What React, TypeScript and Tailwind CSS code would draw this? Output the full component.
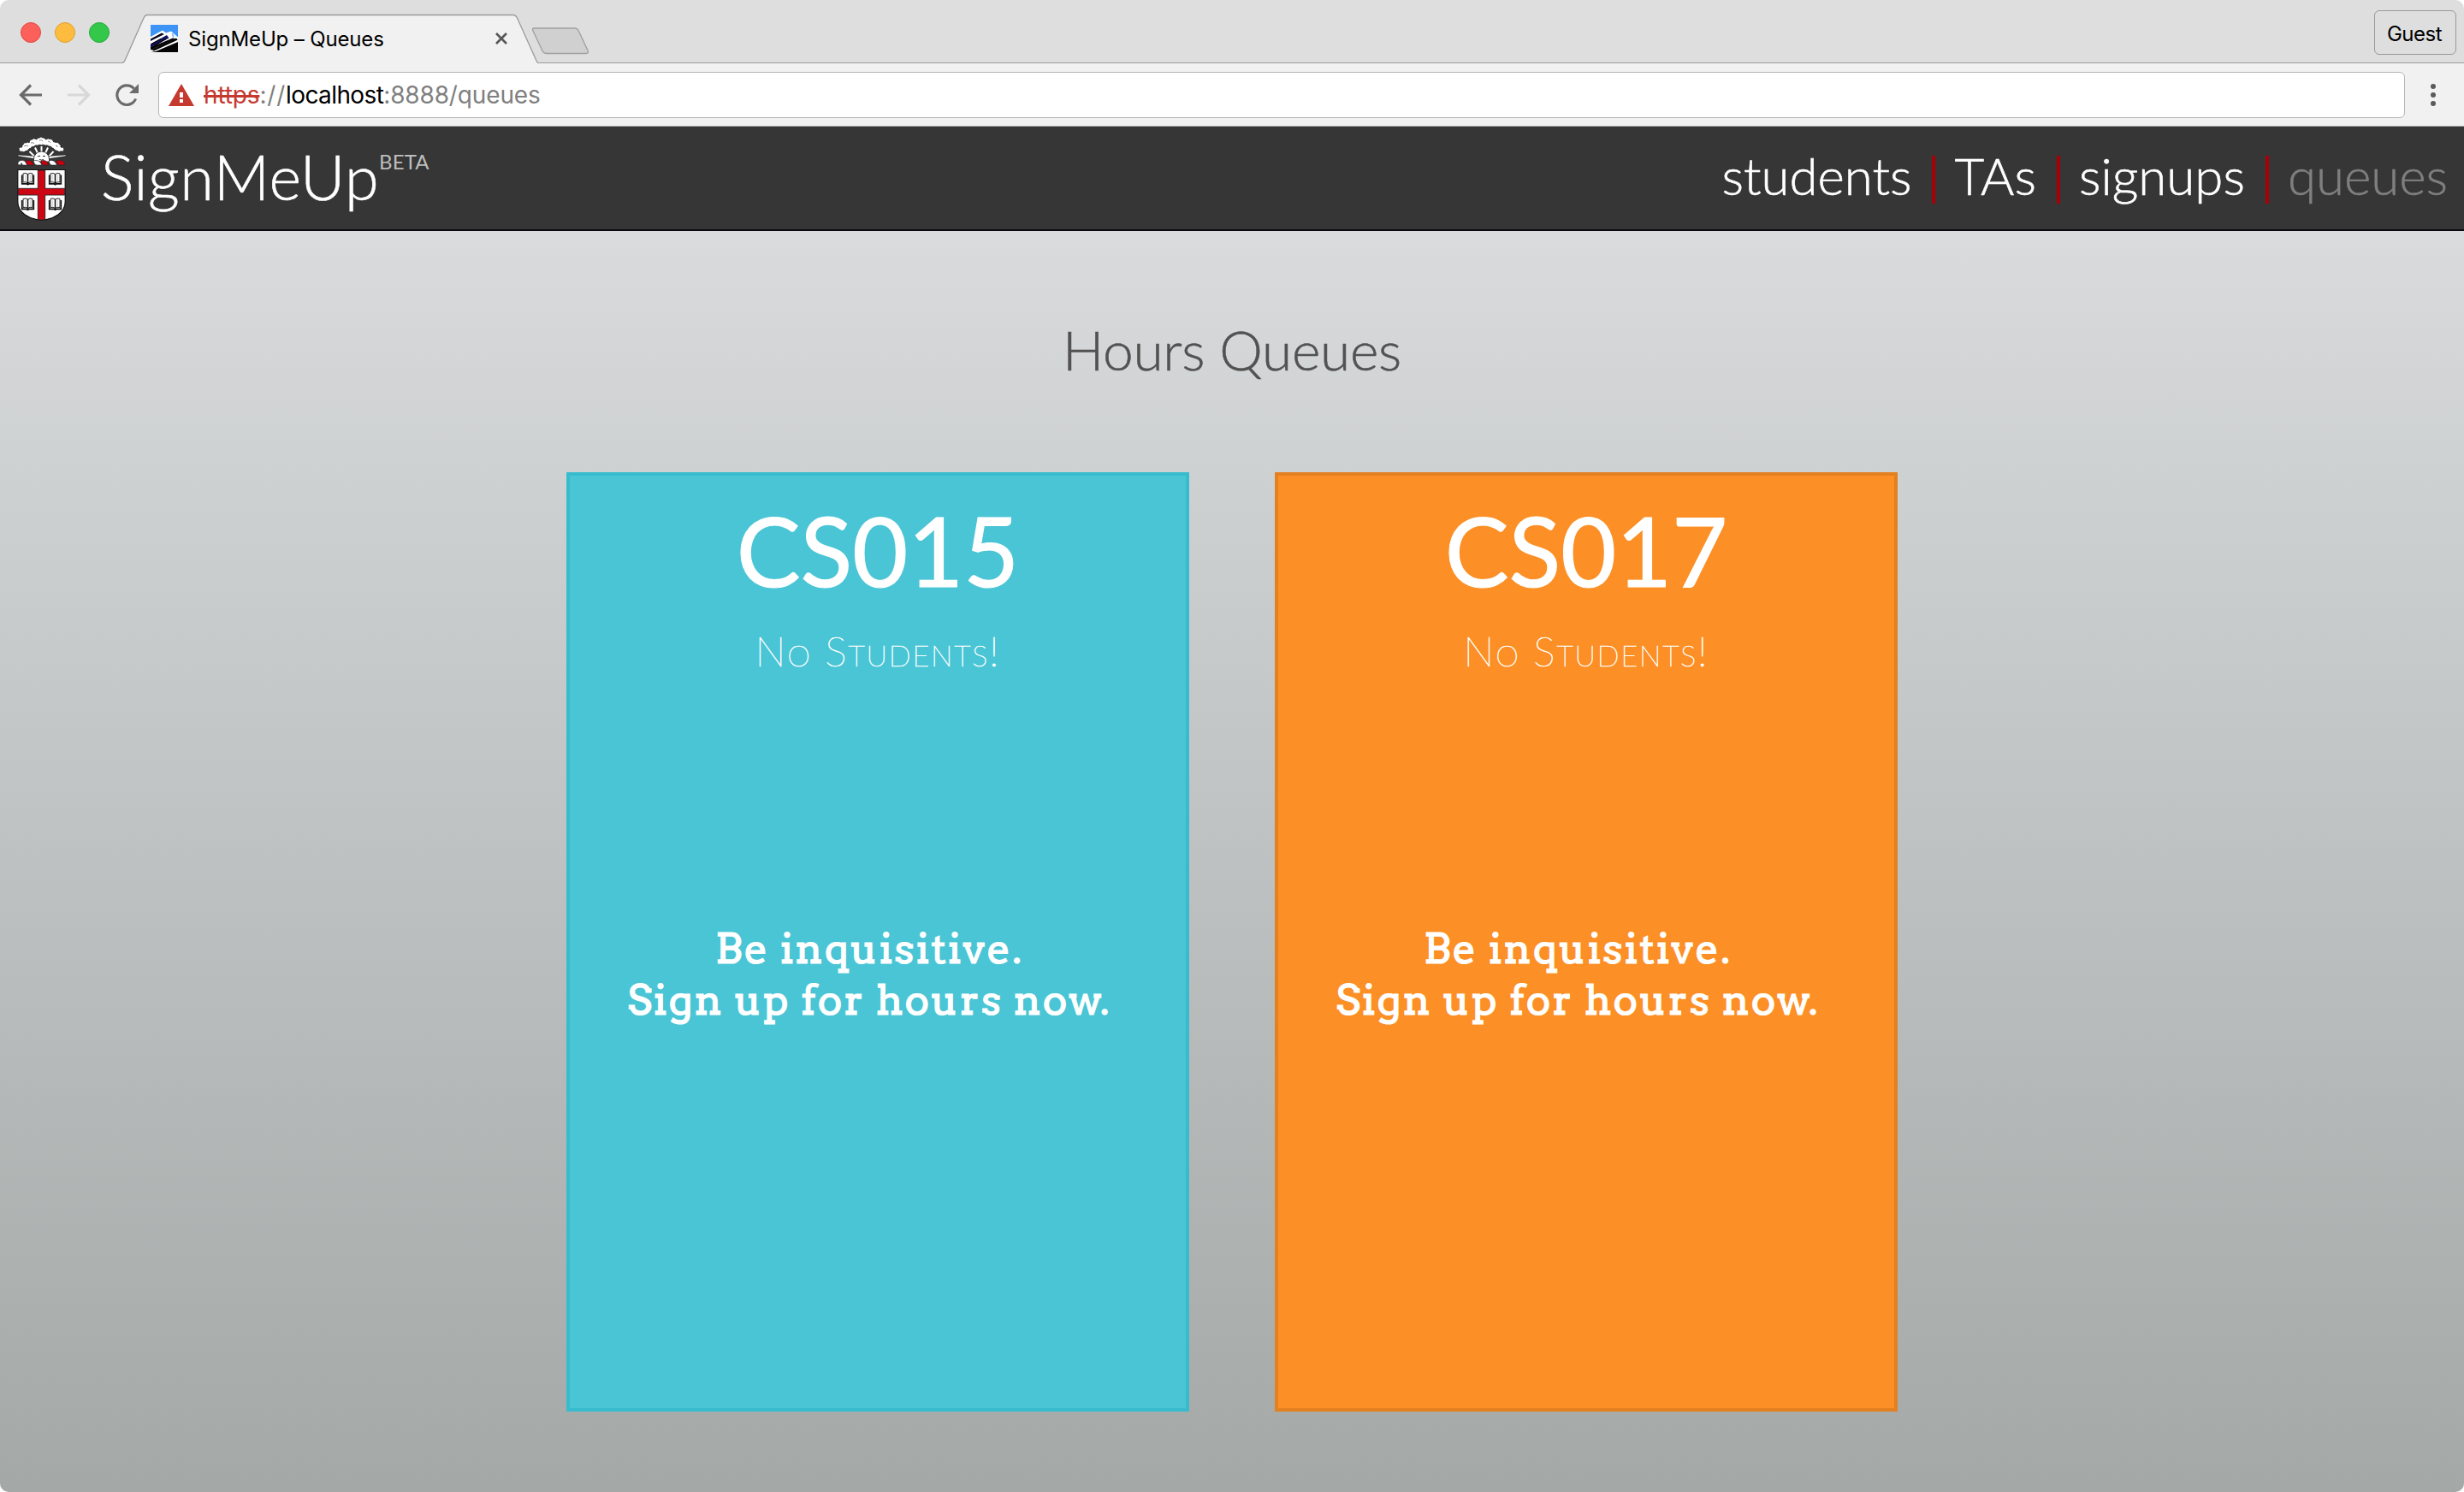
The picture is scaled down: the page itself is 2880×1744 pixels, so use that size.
const navItems = ['students', 'TAs', 'signups', 'queues'];

function Favicon() {
  return (
    <svg className="size-8 shrink-0" viewBox="0 0 32 32">
      <rect width="32" height="32" fill="#3d94f6" />
      <path d="M0 14 14 6.500l4 3 6-2 8 7v8L0 28z" fill="#fff" />
      <path d="M0 16.500 13 9.500l3 1.500L0 19z" fill="#0a0a22" />
      <path d="M0 22.500 19 12l2.500 3.500L0 26.500z" fill="#10105e" />
      <path d="M1 22.500 12 16.500M4 24.500 18 16.500" stroke="#05050d" strokeWidth="1.400" />
      <path d="M24.500 10.500l1.500-1 2 4-2 1.500z" fill="#8fbdf2" />
      <path d="M0 29.500 30 15.500 32 18v5L12 32H0z" fill="#050505" />
      <path d="M0 28.500V32l6-1L32 20v-2.500L4 30.500z" fill="#fff" />
      <path d="M8 32 32 21v11z" fill="#050505" />
      <path d="M0 26 14 20.500 26 15.500 29 16.500 0 29.500z" fill="#050505" />
    </svg>
  );
}

function Tab() {
  return (
    <div className="relative ml-[15px] flex h-[58px] w-[486px] items-center pl-[33px]">
      <svg className="absolute inset-0 h-[58px] w-[486px]" viewBox="0 0 486 58">
        <path d="M0 57.5C2 57 2.500 56 3.500 53.500L25 5C26.300 2 27 1.500 29 1.500H457C459 1.500 460 2 461.500 5L484 55C485 57 485.500 57.500 486 57.500V58H0Z" fill="#f1f1f1" />
        <path d="M0 57.500C2 57 2.500 56 3.500 53.500L25 5C26.300 2 27 1.500 29 1.500H457C459 1.500 460 2 461.500 5L484 55C485 57 485.500 57.500 486 57.500" fill="none" stroke="#9b9b9b" strokeWidth="1.300" />
      </svg>
      <div className="relative flex w-[418px] items-center">
        <Favicon />
        <span className="mt-px ml-3 font-['Inter',sans-serif] text-2xl leading-8 tracking-[-0.15px] text-black">SignMeUp – Queues</span>
        <svg className="ml-auto size-4" viewBox="0 0 16 16">
          <path d="M2 2 14 14M14 2 2 14" stroke="#575757" strokeWidth="2.700" />
        </svg>
      </div>
    </div>
  );
}

function TabStrip() {
  return (
    <div className="flex h-[74px] items-end border-b border-[#9b9b9b] bg-[#dedede]">
      <div className="mb-[23px] ml-6 flex gap-4">
        <div className="size-6 rounded-full border border-[#e2463f] bg-[#fc605b]" />
        <div className="size-6 rounded-full border border-[#dfa023] bg-[#fdbc40]" />
        <div className="size-6 rounded-full border border-[#24a93a] bg-[#34c84a]" />
      </div>
      <div className="-mb-px"><Tab /></div>
      <svg className="mb-[9px] -ml-[8px] h-8 w-[68px]" viewBox="0 0 68 32">
        <path d="M3 1H51C53 1 54 1.500 55 3.500L66 27C67 29.500 66.500 30.500 64 30.500H18C15.500 30.500 14 29.500 13 27.500L2 4C1 2 1.500 1 3 1Z" fill="#d0d0d0" stroke="#9f9f9f" strokeWidth="1.300" />
      </svg>
      <div className="mr-[9px] mb-[9px] ml-auto flex h-[52px] w-24 items-center justify-center rounded-md border border-[#999] pt-[3px] pr-[2px] font-['Inter',sans-serif] text-2xl tracking-[-0.5px] text-black">
        Guest
      </div>
    </div>
  );
}

function Toolbar() {
  return (
    <div className="flex h-[74px] items-center border-b border-[#ababab] bg-[#f1f1f1] pl-[22px]">
      <svg className="h-8 w-7" viewBox="0 0 28 32">
        <path d="M14 4.500 2.500 16 14 27.500M2.500 16H27" fill="none" stroke="#6b6b6b" strokeWidth="3.200" />
      </svg>
      <svg className="ml-7 h-8 w-7" viewBox="0 0 28 32">
        <path d="M14 4.500 25.500 16 14 27.500M25.500 16H1" fill="none" stroke="#d7d7d7" strokeWidth="3.200" />
      </svg>
      <svg className="ml-[27px] h-8 w-8" viewBox="0 0 32 32">
        <path d="M23.500 8.500A11.300 11.300 0 1 0 25.600 20.500" fill="none" stroke="#6b6b6b" strokeWidth="3.200" />
        <path d="M29 3V14H18Z" fill="#6b6b6b" />
      </svg>
      <div className="ml-5 flex h-[54px] w-[2626px] items-center rounded-md border border-[#b5b5b5] bg-white pl-[11px]">
        <svg className="h-[26px] w-[30px]" viewBox="0 0 30 26">
          <path d="M15 0 30 26H0Z" fill="#c5392f" />
          <path d="M13 10h4v6h-4zM13 18h4v4h-4z" fill="#fff" />
        </svg>
        <p className="ml-[11px] font-['Inter',sans-serif] text-[28px] leading-9 tracking-[-0.15px] text-[#808080]">
          <span className="text-[#c5392f] line-through decoration-[2.500px]">https</span>
          <span className="tracking-[0.8px]">://</span>
          <span className="tracking-[-0.6px] text-black">localhost</span>:8888/queues
        </p>
      </div>
      <div className="ml-[30px] flex flex-col gap-1">
        <div className="size-1.5 rounded-full bg-[#5a5a5a]" />
        <div className="size-1.5 rounded-full bg-[#5a5a5a]" />
        <div className="size-1.5 rounded-full bg-[#5a5a5a]" />
      </div>
    </div>
  );
}

function Crest() {
  return (
    <svg className="h-[102px] w-[62px] shrink-0" viewBox="18 8 62 102">
      <path d="M23 26.500C21 24 23 21.500 26 22C26 18 30 15.500 34 17C34.500 13 40 11 43 13C46 9.500 51 10 53.500 13C58 11 62 13 63 16.500C67 15.500 71 18.500 71 22C74.500 22 76 25 73.500 26.500C69 28 66 26.500 63.500 24.500C60 21.500 58 20.500 55 20C51 19 46 19 42 20C38 21 35 23 33 25C30 27.500 26 28 23 26.500Z" fill="#fff" stroke="#111" strokeWidth=".8" strokeDasharray="3 1.500" />
      <path d="M28 21q3-2 5 0M36 17q3-1 4 1M46 14q3-1 4 1M56 15q2 0 3 2M65 20q2 0 2 2" fill="none" stroke="#555" strokeWidth=".7" />
      <path d="M34.500 27 40.500 33M41 22.500 44 29M48.500 21V28M56 22.500 53 29M62.500 27 57 33" stroke="#fff" strokeWidth="2" />
      <path d="M21 31 40 32.500V35.500L21 32.500ZM77 31 57 32.500V35.500L77 32.500Z" fill="#fff" stroke="#111" strokeWidth=".5" />
      <path d="M39.500 39V36A9 9 0 0 1 57.500 36V39Z" fill="#fff" stroke="#111" strokeWidth=".7" />
      <path d="M44 32.500h3M50 32.500h3M46 36.500q2.500 1.200 5 0" fill="none" stroke="#333" strokeWidth="1" />
      <g strokeWidth=".6" stroke="#222">
        <path d="M21 42.500C20 37 27 36.500 29.500 39L32 43H26.500L25 40.500L24 43Z" fill="#fff" />
        <path d="M30 38C34 36.500 37.500 38 39.500 43H34C31.500 43 30.500 41 30 38Z" fill="#c9000f" />
        <path d="M39 38C43 36.500 47 38 49 43H43.500C41 43 40 41 39 38Z" fill="#fff" />
        <path d="M48 38C52 36.500 55 38 57 43H51.500C49 43 48.500 41 48 38Z" fill="#c9000f" />
        <path d="M57 38C61 36.500 64.500 38 66.500 43H61C58.500 43 58 41 57 38Z" fill="#fff" />
        <path d="M66 38C70 36.500 75.500 37.500 76 43H70C67.500 43 66.500 41 66 38Z" fill="#c9000f" />
      </g>
      <path d="M20.800 48.500H76.200V86C76.200 98 64 106 48.500 107.500C33 106 20.800 98 20.800 86Z" fill="#fff" stroke="#111" strokeWidth="1.200" />
      <path d="M44.300 49H52.700V70.300H75.800V78H52.700V106.500L48.500 107.200 44.300 106.500V78H21.200V70.300H44.300Z" fill="#cc0612" stroke="#222" strokeWidth=".9" />
      {[[32.500, 59], [64.500, 59], [32.500, 88.500], [64.500, 88.500]].map(([x, y]) => (
        <g key={`${x}-${y}`} transform={`translate(${x} ${y})`}>
          <path d="M-5.500-6Q-2.500-7.500 0-5.500Q2.500-7.500 5.500-6V4Q2.500 3 0 5Q-2.500 3-5.500 4Z" fill="#fff" stroke="#222" strokeWidth="1" />
          <path d="M-6.800-4.500V5.800H-1.500L0 6.800 1.500 5.800H6.800V-4.500" fill="none" stroke="#111" strokeWidth="1.700" />
          <path d="M0-5.500V6" stroke="#111" strokeWidth="1.500" />
          <path d="M-2.800-5V3M2.800-5V3" stroke="#bbb" strokeWidth=".7" />
        </g>
      ))}
    </svg>
  );
}

function SiteHeader() {
  return (
    <header className="flex h-[122px] items-start border-b-2 border-[#0b0b0d] bg-[#363636] pl-[18px] font-['Lato',sans-serif] font-light">
      <div className="pt-[10px]"><Crest /></div>
      <h1 className="mt-[22px] ml-[38px] text-[72px] leading-none tracking-[0.5px] text-white [-webkit-text-stroke:0.6px_white]">SignMeUp</h1>
      <span className="mt-[29px] text-[24px] leading-none font-normal tracking-[0.1px] text-[#bdbdbd]">BETA</span>
      <nav className="mt-[27px] mr-[19px] ml-auto flex items-start">
        {navItems.map((item, i) => (
          <div key={item} className="flex items-start">
            {i > 0 && <div className="mt-[7px] mr-[22px] ml-6 h-14 w-1 bg-[#a90007]" />}
            <a className={i === 3 ? 'text-[60px] leading-none text-[#7f7f7f] [-webkit-text-stroke:0.5px_#7f7f7f]' : 'text-[60px] leading-none text-white [-webkit-text-stroke:0.6px_white]'}>{item}</a>
          </div>
        ))}
      </nav>
    </header>
  );
}

function QueueCard({ course, tone }: { course: string; tone: string }) {
  return (
    <section className={`flex h-[1098px] w-[728px] flex-col items-center border-4 text-white ${tone}`}>
      <h3 className="mt-[31px] font-['Lato',sans-serif] text-[112px] leading-none font-normal [-webkit-text-stroke:1.2px_white]">{course}</h3>
      <p className="mt-[38px] font-['Lato',sans-serif] text-[48px] leading-none font-thin tracking-[1.8px] [font-variant-caps:small-caps] [-webkit-text-stroke:0.7px_white]">
        No Students!
      </p>
      <p className="mt-[294px] mr-5 text-center font-['Arvo','DejaVu_Serif',serif] text-[48px] leading-[60px] tracking-[2.1px] [-webkit-text-stroke:1.2px_white]">
        Be inquisitive.
        <br />
        Sign up for hours now.
      </p>
    </section>
  );
}

export default function App() {
  return (
    <div className="h-[1744px] w-[2880px] bg-white">
      <div className="flex h-full flex-col overflow-hidden rounded-[10px]">
        <TabStrip />
        <Toolbar />
        <SiteHeader />
        <main className="flex flex-1 flex-col items-center bg-linear-to-b from-[#d9dbdc] via-[#c5c9c9] via-35% to-[#a4a9a8]">
          <h2 className="mt-[107px] font-['Lato',sans-serif] text-[64px] leading-none font-light tracking-[-0.3px] text-[#525252] [-webkit-text-stroke:0.5px_#525252]">Hours Queues</h2>
          <div className="mt-[111px] flex gap-[100px]">
            <QueueCard course="CS015" tone="bg-[#4ac5d5] border-[#38bccd]" />
            <QueueCard course="CS017" tone="bg-[#fc8f25] border-[#e38020]" />
          </div>
        </main>
      </div>
    </div>
  );
}
